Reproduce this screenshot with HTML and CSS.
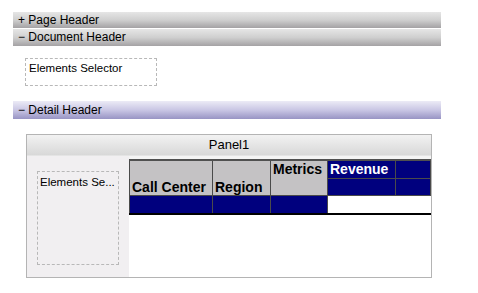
FILE: index.html
```html
<!DOCTYPE html>
<html>
<head>
<meta charset="utf-8">
<link rel="stylesheet" href="styles.css">
</head>
<body>
<div class="page">
  <div class="bar gray">+ Page Header</div>
  <div class="bar gray">&minus; Document Header</div>
  <div class="doc-body">
    <div class="selector">Elements Selector</div>
  </div>
  <div class="bar purple">&minus; Detail Header</div>
  <div class="panel">
    <div class="panel-title">Panel1</div>
    <div class="panel-body">
      <div class="side">
        <div class="side-sel">Elements Se...</div>
      </div>
      <div class="grid-wrap">
        <table class="grid">
          <colgroup>
            <col class="k1"><col class="k2"><col class="k3"><col class="k4"><col class="k5">
          </colgroup>
          <tr>
            <td class="h" rowspan="2">Call Center</td>
            <td class="h" rowspan="2">Region</td>
            <td class="h top" rowspan="2">Metrics</td>
            <td class="b rev">Revenue</td>
            <td class="b"></td>
          </tr>
          <tr>
            <td class="b r2"></td>
            <td class="b r2"></td>
          </tr>
          <tr class="data">
            <td class="b"></td>
            <td class="b"></td>
            <td class="b"></td>
            <td class="w"></td>
            <td class="w"></td>
          </tr>
        </table>
      </div>
    </div>
  </div>
</div>
</body>
</html>
```
FILE: styles.css
```css
html, body { margin: 0; padding: 0; background: #fff; }
body { font-family: "Liberation Sans", Arial, sans-serif; color: #000; }
.page { padding-top: 12px; }
.bar {
  margin-left: 13px;
  width: 428px;
  height: 17px;
  line-height: 17px;
  font-size: 12px;
  padding-left: 5px;
  box-sizing: border-box;
  border-bottom: 1px solid #fff;
}
.gray { background: linear-gradient(#e6e6e6, #cfcfcf 50%, #a4a2a4); }
.gray + .gray { height: 18px; }
.purple { background: linear-gradient(#ecebf6, #c9c6e4 50%, #9894c4); height: 19px; line-height: 19px; }
.doc-body { height: 54px; padding-top: 11px; box-sizing: border-box; padding-left: 25px; }
.selector {
  width: 132px; height: 28px; box-sizing: border-box;
  border: 1px dashed #b8b8b8;
  font-size: 11.5px; padding: 3px 0 0 3px;
}
.panel {
  margin: 14px 0 0 26px;
  width: 406px; height: 144px;
  box-sizing: border-box;
  border: 1px solid #b4b4b4;
  display: flex; flex-direction: column;
}
.panel-title {
  height: 20px; line-height: 20px; text-align: center;
  font-size: 13px;
  background: linear-gradient(#f2f2f2, #d8d8d8);
  border-bottom: 1px solid #e4e4e4;
}
.panel-body { flex: 1; display: flex; }
.side { width: 103px; background: #f1eff1; padding: 15px 0 0 10px; box-sizing: border-box; }
.side-sel {
  width: 82px; height: 94px; box-sizing: border-box;
  border: 1px dashed #b8b8b8;
  font-size: 11.5px; padding: 4px 0 0 2px;
  white-space: nowrap;
}
.grid-wrap { flex: 1; padding-top: 3px; background: linear-gradient(#f4f4f4 0 3px, #fff 3px); }
.grid {
  border-collapse: collapse;
  table-layout: fixed;
  width: 301px;
  font-family: "Liberation Sans", Arial, sans-serif;
  font-weight: bold;
  font-size: 14px;
  border-top: 2px solid #505050;
  border-bottom: 2px solid #000;
}
.k1 { width: 83px; }
.k2 { width: 58px; }
.k3 { width: 57px; }
.k4 { width: 68px; }
.k5 { width: 35px; }
.grid td { padding: 0 2px; border: 1px solid #4a4a4a; white-space: nowrap; overflow: hidden; }
.h { background: #c4c2c4; vertical-align: bottom; height: 34px; padding-bottom: 0 !important; }
.top { vertical-align: top; padding-top: 0 !important; }
.b { background: #00007e; color: #fff; }
.rev { height: 17px; vertical-align: top; }
.r2 { height: 16px; }
.data td { height: 17px; }
.w { background: #fff; border-left: none !important; border-right: none !important; }
```
